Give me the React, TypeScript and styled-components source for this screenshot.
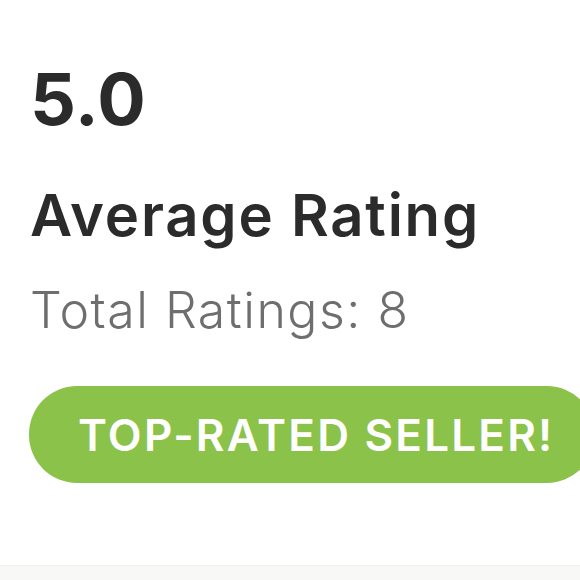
import React from "react";
import styled, { createGlobalStyle } from "styled-components";

const GlobalStyle = createGlobalStyle`
  html, body {
    margin: 0;
    padding: 0;
    background: #ffffff;
  }

  body {
    font-family: "Inter", "Noto Sans", sans-serif;
  }
`;

const Page = styled.div`
  width: 580px;
  height: 580px;
  overflow: hidden;
  display: flex;
  flex-direction: column;
  background: #ffffff;
`;

const RatingCard = styled.section`
  flex: 1;
  display: flex;
  flex-direction: column;
  align-items: flex-start;
  padding: 63px 0 0 30px;
`;

const Score = styled.div`
  font-size: 72px;
  line-height: 1;
  font-weight: 700;
  letter-spacing: 0.5px;
  color: #2b2b2b;
`;

const Title = styled.h2`
  margin: 51px 0 0;
  font-size: 58px;
  line-height: 1;
  font-weight: 600;
  letter-spacing: 1.8px;
  color: #2b2b2b;
`;

const Subtitle = styled.p`
  margin: 41px 0 0;
  font-size: 50px;
  line-height: 1;
  font-weight: 300;
  letter-spacing: 1.5px;
  color: #6e6e6e;
`;

const Badge = styled.div`
  margin-top: 51px;
  margin-left: -1px;
  width: 566px;
  height: 97px;
  flex-shrink: 0;
  box-sizing: border-box;
  display: flex;
  align-items: center;
  padding-left: 49px;
  border-radius: 48px;
  background: #8bc34a;
  color: #ffffff;
  font-size: 44px;
  font-weight: 600;
  letter-spacing: 2.2px;
  text-transform: uppercase;
  white-space: nowrap;
`;

const Footer = styled.footer`
  height: 14px;
  border-top: 1px solid #f1f1ec;
  background: #f8f8f6;
`;

const App = () => {
  const rating = { average: "5.0", total: 8 };

  return (
    <>
      <GlobalStyle />
      <Page>
        <RatingCard>
          <Score>{rating.average}</Score>
          <Title>Average Rating</Title>
          <Subtitle>Total Ratings: {rating.total}</Subtitle>
          <Badge>Top-Rated Seller!</Badge>
        </RatingCard>
        <Footer />
      </Page>
    </>
  );
};

export default App;
